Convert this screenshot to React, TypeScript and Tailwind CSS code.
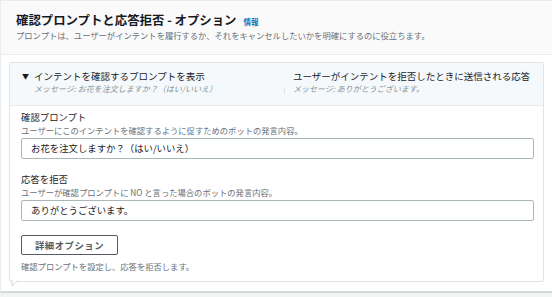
import { Fragment } from 'react'

function Field({ label, hint, value }: { label: string; hint: string; value: string }) {
  return (
    <Fragment>
      <div className="text-[9.4px] leading-[14px] text-[#16191f]">{label}</div>
      <div className="text-[8.3px] leading-[12px] text-[#687078]">{hint}</div>
      <div className="mt-[2px] h-[21px] border border-[#aab7b8] rounded-[2px] bg-white flex items-center pl-[9px] text-[9.4px] text-[#16191f]">
        {value}
      </div>
    </Fragment>
  )
}

export default function App() {
  return (
    <div className="w-[552px] h-[297px] bg-[#f2f3f3] overflow-hidden font-['Noto_Sans_CJK_JP','Noto_Sans',sans-serif]">
      <div className="h-[293px] bg-white border-l border-t border-[#eaeded] border-b-2 border-b-[#d5dbdb]">
        {/* Header */}
        <div className="h-[54px] bg-[#fafafa] border-b border-[#eaeded] pl-[15px] pt-[11px]">
          <div className="flex items-baseline gap-[7px]">
            <span className="text-[12.4px] leading-[16px] font-bold text-[#16191f]">確認プロンプトと応答拒否 - オプション</span>
            <span className="text-[7.5px] font-bold text-[#0073bb]">情報</span>
          </div>
          <div className="mt-[1px] text-[8.3px] leading-[12px] text-[#687078]">
            プロンプトは、ユーザーがインテントを履行するか、それをキャンセルしたいかを明確にするのに役立ちます。
          </div>
        </div>

        {/* Body */}
        <div className="pl-[8px] pr-[8px] pt-[7px]">
          <div className="relative border border-[#e1e4e4] rounded-[2px] h-[220px]">
            <div className="flex h-[43px] bg-[#f6f9fc] border-b border-[#eaeded]">
              <div className="w-[274px] pt-[6px] pl-[12px] flex gap-[5px]">
                <span className="text-[7px] leading-[14px] text-[#16191f]">▼</span>
                <div>
                  <div className="text-[9.5px] leading-[14px] text-[#16191f]">インテントを確認するプロンプトを表示</div>
                  <div className="text-[8px] leading-[12px] italic text-[#879596]">メッセージ: お花を注文しますか？（はい/いいえ）</div>
                </div>
              </div>
              <div className="flex-1 flex pt-[6px]">
                <div className="w-px h-[6px] mt-[19px] bg-[#e1e4e4]" />
                <div className="pl-[8px]">
                  <div className="text-[9.5px] leading-[14px] text-[#16191f]">ユーザーがインテントを拒否したときに送信される応答</div>
                  <div className="text-[8px] leading-[12px] italic text-[#879596]">メッセージ: ありがとうございます。</div>
                </div>
              </div>
            </div>

            <div className="pl-[11px] pr-[9px] pt-[4px]">
              <Field
                label="確認プロンプト"
                hint="ユーザーにこのインテントを確認するように促すためのボットの発言内容。"
                value="お花を注文しますか？（はい/いいえ）"
              />
              <div className="mt-[13px]" />
              <Field
                label="応答を拒否"
                hint="ユーザーが確認プロンプトに NO と言った場合のボットの発言内容。"
                value="ありがとうございます。"
              />
              <button className="mt-[14px] w-[97px] h-[20px] border border-[#545b64] rounded-[2px] bg-white text-[9.4px] font-bold text-[#545b64] tracking-[0.5px]">
                詳細オプション
              </button>
              <div className="mt-[5px] text-[8.3px] leading-[12px] text-[#687078]">
                確認プロンプトを設定し、応答を拒否します。
              </div>
            </div>

            <svg className="absolute left-[1px] top-full -mt-px" width="8" height="7" viewBox="0 0 8 7">
              <path d="M1 0 L1 6 L7 0.5" fill="white" stroke="#d5dbdb" strokeWidth="1" />
            </svg>
          </div>
        </div>
      </div>
    </div>
  )
}
